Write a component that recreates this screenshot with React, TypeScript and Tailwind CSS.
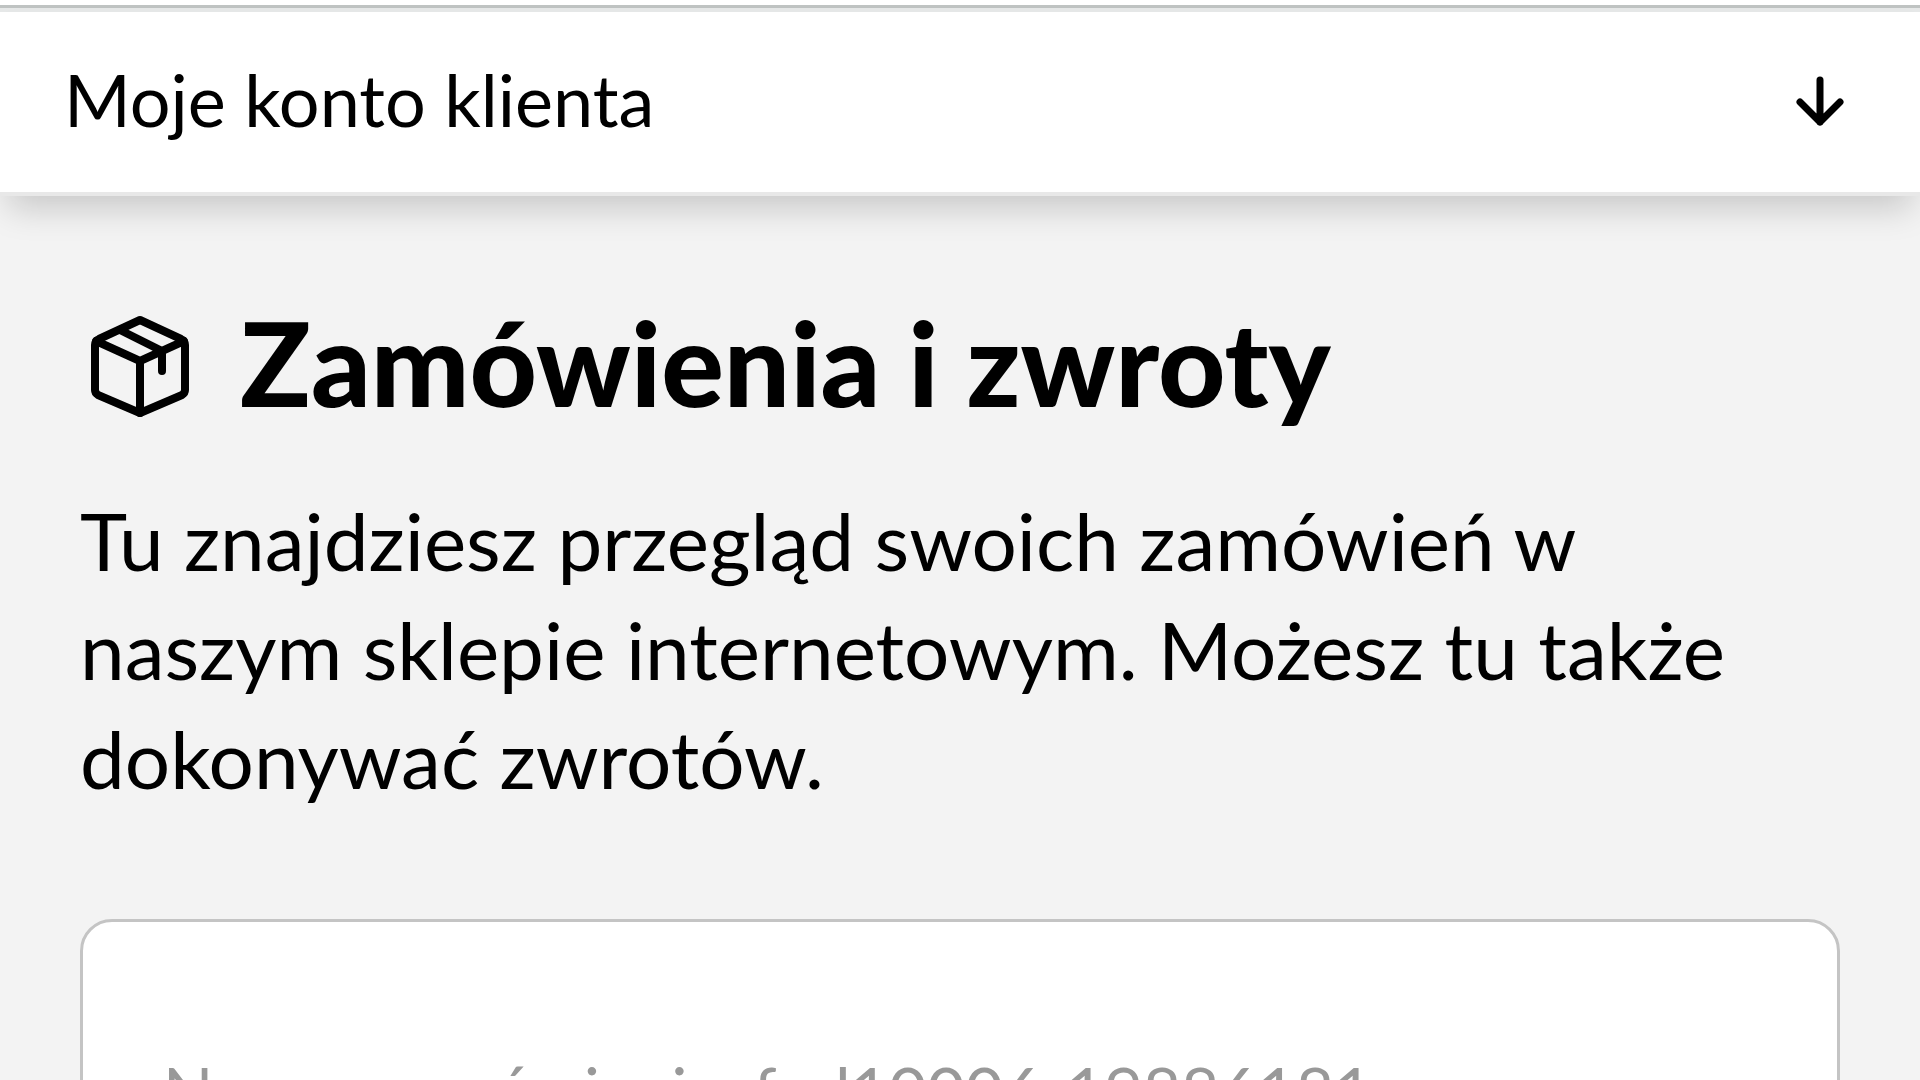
export default function App() {
  return (
    <div className="min-h-screen bg-[#f3f3f3] font-['Lato',sans-serif] text-black">
      <div className="border-b-4 border-[#e6e8e8] bg-white pt-[5px]">
        <div className="h-[3px] bg-[#bfc3c2]" />
      </div>
      <button
        type="button"
        className="flex w-full items-center justify-between border-b-4 border-[#e8e8e8] bg-white px-16 py-10 text-left text-[72px] leading-[94px] shadow-[0_20px_32px_-8px_rgba(0,0,0,0.18)]"
      >
        <span className="pb-1.5">Moje konto klienta</span>
        <svg
          viewBox="0 0 64 64"
          className="mr-1 size-16"
          fill="none"
          stroke="currentColor"
          strokeWidth="7"
          strokeLinecap="round"
          strokeLinejoin="round"
          aria-hidden="true"
        >
          <path d="M32 10v42M12 32l20 20 20-20" />
        </svg>
      </button>
      <main className="px-20 pt-[110px]">
        <h1 className="flex items-center gap-10 text-[117px] leading-[112px] font-black">
          <svg
            viewBox="0 0 120 120"
            className="size-[120px] shrink-0"
            fill="none"
            stroke="currentColor"
            strokeWidth="8"
            strokeLinecap="round"
            strokeLinejoin="round"
            aria-hidden="true"
          >
            <path d="M60 14L19 33Q15 35 15 39V84Q15 87 18 89L60 107L102 89Q105 87 105 84V39Q105 35 101 33Z" />
            <path d="M16 35L60 55L104 35M60 55V107M40 24L82 45V65" />
          </svg>
          <span className="pb-2">Zamówienia i zwroty</span>
        </h1>
        <p className="mt-15 text-[80px] leading-[109px]">
          Tu znajdziesz przegląd swoich zamówień w naszym sklepie internetowym. Możesz tu także dokonywać zwrotów.
        </p>
        <section className="mt-[106px] rounded-[32px] border-3 border-[#c4c4c4] bg-white px-20 py-[118px]">
          <p className="text-[66px] leading-[100px] text-[#999999]">Numer zamówienia: fnd10006-19886181</p>
        </section>
      </main>
    </div>
  );
}
